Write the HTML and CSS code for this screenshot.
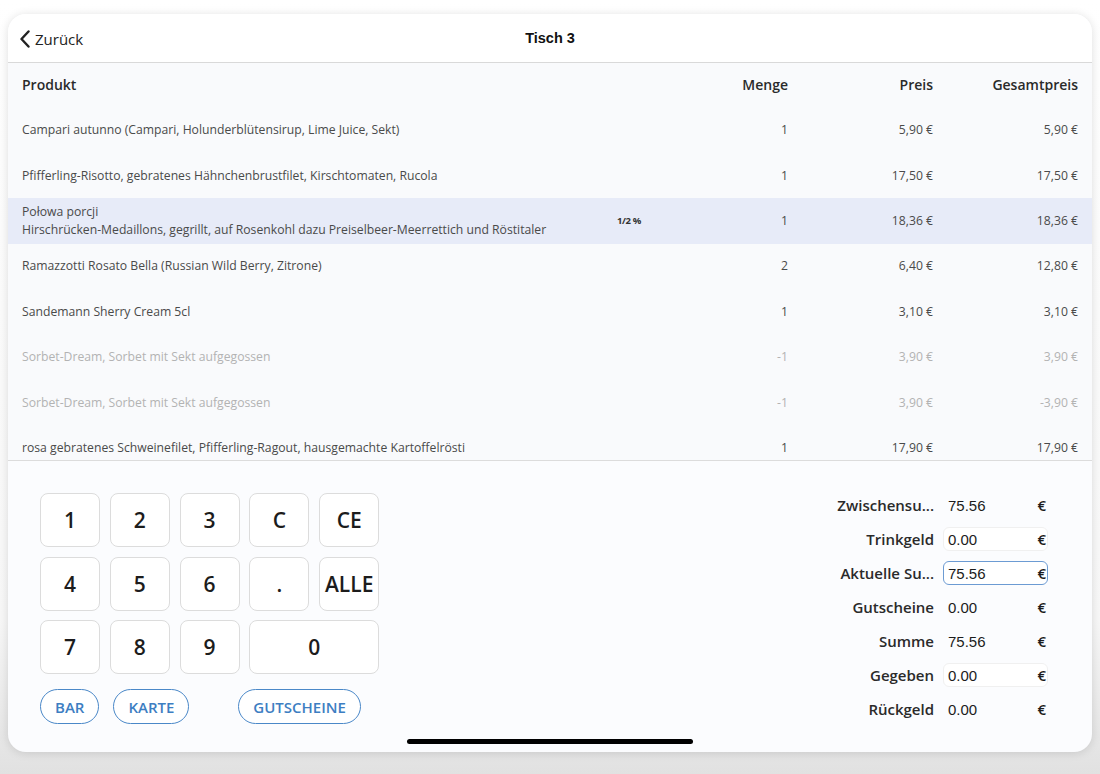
FILE: index.html
```html
<!DOCTYPE html>
<html lang="de">
<head>
    <meta charset="UTF-8">
    <meta name="viewport" content="width=device-width, initial-scale=1.0">
    <title>Tisch 3</title>
    <link rel="stylesheet" href="styles.css">
</head>
<body>
    <div class="geraet">
        <header class="kopf">
            <a class="zurueck">
                <svg width="12" height="18" viewBox="0 0 12 18"><path d="M9.5 1.5 L2.5 9 L9.5 16.5" fill="none" stroke="#222" stroke-width="2.4" stroke-linecap="round" stroke-linejoin="round"/></svg>
                Zurück
            </a>
            <h1>Tisch 3</h1>
        </header>

        <section class="liste">
            <div class="zeile titel">
                <span>Produkt</span><span></span><span class="r">Menge</span><span class="r">Preis</span><span class="r">Gesamtpreis</span>
            </div>
            <div class="zeile">
                <span>Campari autunno (Campari, Holunderblütensirup, Lime Juice, Sekt)</span><span></span><span class="r">1</span><span class="r">5,90 €</span><span class="r">5,90 €</span>
            </div>
            <div class="zeile">
                <span>Pfifferling-Risotto, gebratenes Hähnchenbrustfilet, Kirschtomaten, Rucola</span><span></span><span class="r">1</span><span class="r">17,50 €</span><span class="r">17,50 €</span>
            </div>
            <div class="zeile aktiv">
                <span>Połowa porcji<br>Hirschrücken-Medaillons, gegrillt, auf Rosenkohl dazu Preiselbeer-Meerrettich und Röstitaler</span><span class="rabatt">1/2 %</span><span class="r">1</span><span class="r">18,36 €</span><span class="r">18,36 €</span>
            </div>
            <div class="zeile">
                <span>Ramazzotti Rosato Bella (Russian Wild Berry, Zitrone)</span><span></span><span class="r">2</span><span class="r">6,40 €</span><span class="r">12,80 €</span>
            </div>
            <div class="zeile">
                <span>Sandemann Sherry Cream 5cl</span><span></span><span class="r">1</span><span class="r">3,10 €</span><span class="r">3,10 €</span>
            </div>
            <div class="zeile storno">
                <span>Sorbet-Dream, Sorbet mit Sekt aufgegossen</span><span></span><span class="r">-1</span><span class="r">3,90 €</span><span class="r">3,90 €</span>
            </div>
            <div class="zeile storno">
                <span>Sorbet-Dream, Sorbet mit Sekt aufgegossen</span><span></span><span class="r">-1</span><span class="r">3,90 €</span><span class="r">-3,90 €</span>
            </div>
            <div class="zeile">
                <span>rosa gebratenes Schweinefilet, Pfifferling-Ragout, hausgemachte Kartoffelrösti</span><span></span><span class="r">1</span><span class="r">17,90 €</span><span class="r">17,90 €</span>
            </div>
        </section>

        <section class="kasse">
            <div class="links">
                <div class="tasten">
                    <button>1</button><button>2</button><button>3</button><button>C</button><button>CE</button>
                    <button>4</button><button>5</button><button>6</button><button>.</button><button>ALLE</button>
                    <button>7</button><button>8</button><button>9</button><button class="null">0</button>
                </div>
                <div class="zahlarten">
                    <button class="pille">BAR</button>
                    <button class="pille">KARTE</button>
                    <button class="pille weit">GUTSCHEINE</button>
                </div>
            </div>

            <div class="summen">
                <span class="lbl">Zwischensu...</span><div class="wert"><span>75.56</span><b>€</b></div>
                <span class="lbl">Trinkgeld</span><div class="wert feld"><span>0.00</span><b>€</b></div>
                <span class="lbl">Aktuelle Su...</span><div class="wert feld fokus"><span>75.56</span><b>€</b></div>
                <span class="lbl">Gutscheine</span><div class="wert"><span>0.00</span><b>€</b></div>
                <span class="lbl">Summe</span><div class="wert"><span>75.56</span><b>€</b></div>
                <span class="lbl">Gegeben</span><div class="wert feld"><span>0.00</span><b>€</b></div>
                <span class="lbl">Rückgeld</span><div class="wert"><span>0.00</span><b>€</b></div>
            </div>
        </section>

        <div class="homebalken"></div>
    </div>
</body>
</html>
```

FILE: styles.css
```css
body {
    margin: 0px;
    height: 774px;
    padding: 14px 8px 0px;
    box-sizing: border-box;
    font-family: "Open Sans", sans-serif;
    background: linear-gradient(to bottom, #ffffff 0%, #f7f7f7 80%, #e1e1e1 100%);
    overflow: hidden;
}
.geraet {
    position: relative;
    width: 1084px;
    height: 738px;
    border-radius: 18px;
    overflow: hidden;
    background-color: #fbfcfe;
    box-shadow: 0px 1px 10px rgba(0, 0, 0, 0.13);
    display: flex;
    flex-direction: column;
}
.kopf {
    height: 48px;
    flex: none;
    display: flex;
    align-items: center;
    justify-content: center;
    position: relative;
    background-color: #fff;
    border-bottom: 1px solid #d9d9d9;
}
.zurueck {
    position: absolute;
    left: 11px;
    top: 15px;
    display: flex;
    align-items: center;
    gap: 4px;
    font-size: 15px;
    color: #222;
}
.kopf h1 {
    margin: 0px;
    font-family: "Liberation Sans", sans-serif;
    font-size: 14.5px;
    font-weight: bold;
    color: #111;
}
.liste {
    height: 397px;
    flex: none;
    overflow: hidden;
    background-color: #f9fafc;
    border-bottom: 1px solid #dcdcdc;
}
.zeile {
    display: grid;
    grid-template-columns: 1fr 80px 100px 145px 145px;
    align-items: center;
    height: 45.4px;
    padding: 0px 14px;
    font-size: 12.2px;
    color: #4a4a4a;
    line-height: 18px;
}
.zeile.titel {
    height: 44.6px;
    font-size: 14px;
    font-weight: 600;
    color: #2a2a2a;
}
.zeile.aktiv {
    background-color: #e7ebf8;
}
.zeile.storno {
    color: #b3b3b3;
}
.r {
    text-align: right;
}
.rabatt {
    padding-left: 9px;
    font-size: 9.5px;
    font-weight: 700;
    color: #333;
    letter-spacing: -0.4px;
}
.kasse {
    flex: 1;
    display: flex;
    justify-content: space-between;
    padding: 32px 44px 0px 32px;
}
.tasten {
    display: grid;
    grid-template-columns: repeat(5, 60px);
    grid-auto-rows: 54px;
    column-gap: 9.8px;
    row-gap: 9.5px;
}
.tasten button {
    font-family: "Open Sans", sans-serif;
    font-size: 21px;
    font-weight: 600;
    color: #1c1c1c;
    background-color: #fff;
    border: 1px solid #dcdcdc;
    border-radius: 8px;
    padding: 0px;
}
.tasten .null {
    grid-column: span 2;
}
.zahlarten {
    display: flex;
    gap: 14px;
    margin-top: 15px;
}
.pille {
    height: 35px;
    padding: 0px 14px;
    font-family: "Open Sans", sans-serif;
    font-size: 15px;
    font-weight: 600;
    color: #3d7ec2;
    background-color: #fff;
    border: 1px solid #4a88c8;
    border-radius: 18px;
}
.pille.weit {
    margin-left: 35px;
}
.summen {
    display: grid;
    grid-template-columns: 110px 105px;
    grid-auto-rows: 34px;
    column-gap: 9px;
    align-items: center;
    margin-top: -5px;
}
.lbl {
    text-align: right;
    font-size: 15px;
    font-weight: 600;
    color: #2a2a2a;
    white-space: nowrap;
}
.wert {
    display: flex;
    justify-content: space-between;
    align-items: center;
    height: 24px;
    box-sizing: border-box;
    padding: 0px 1px 0px 4px;
    border: 1px solid transparent;
    border-radius: 6px;
    font-family: "Liberation Sans", sans-serif;
    font-size: 15px;
    color: #1c1c1c;
}
.wert b {
    font-family: "Open Sans", sans-serif;
    font-weight: 600;
}
.wert.feld {
    border-color: #f0f0f0;
    background-color: #fff;
}
.wert.fokus {
    border: 1.5px solid #6c9bd3;
}
.homebalken {
    position: absolute;
    left: 399px;
    bottom: 8px;
    width: 286px;
    height: 5px;
    border-radius: 3px;
    background-color: #000;
}
```
